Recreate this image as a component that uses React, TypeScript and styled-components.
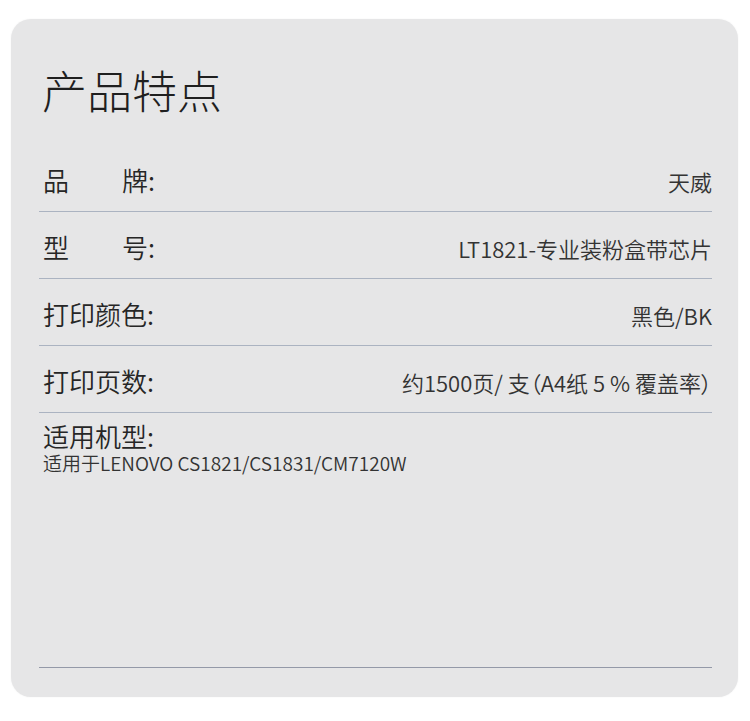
import React from "react";
import styled, { createGlobalStyle } from "styled-components";

const GlobalStyle = createGlobalStyle`
  html, body {
    margin: 0;
    padding: 0;
    background: #ffffff;
  }
  body {
    font-family: "Noto Sans CJK SC", "Noto Sans", sans-serif;
  }
`;

const Page = styled.div`
  width: 750px;
  height: 721px;
  box-sizing: border-box;
  padding: 19px 12px 24px 11px;
  background: #ffffff;
`;

const Card = styled.section`
  box-sizing: border-box;
  height: 678px;
  display: flex;
  flex-direction: column;
  padding: 48px 26px 29px 28px;
  background: #e6e6e7;
  border-radius: 20px;
  box-shadow: 0 0 2px rgba(0, 0, 0, 0.06);
`;

const Title = styled.h1`
  margin: 0 0 33px;
  padding-left: 3px;
  font-family: "Noto Sans CJK SC", sans-serif;
  font-size: 45px;
  line-height: 45px;
  font-weight: 300;
  color: #1f1f1f;
`;

const Row = styled.div`
  display: flex;
  align-items: baseline;
  justify-content: space-between;
  padding: 21px 0 17px 4px;
  border-bottom: 1px solid #abb3c1;
`;

const LastRow = styled.div`
  flex: 1;
  display: flex;
  flex-direction: column;
  gap: 3px;
  padding: 9px 0 0 4px;
  border-bottom: 1px solid #9499a8;
`;

const Label = styled.div<{ $spread?: boolean }>`
  display: flex;
  justify-content: ${(p) => (p.$spread ? "space-between" : "flex-start")};
  width: ${(p) => (p.$spread ? "112px" : "auto")};
  font-size: 26px;
  line-height: 28px;
  font-weight: 350;
  color: #262626;
  white-space: nowrap;
`;

const Value = styled.div`
  font-size: 22px;
  line-height: 22px;
  font-weight: 350;
  font-feature-settings: "palt";
  color: #333333;
  white-space: nowrap;
`;

const Note = styled.div`
  font-size: 19px;
  line-height: 20px;
  font-weight: 350;
  color: #333333;
  white-space: nowrap;
`;

type Spec = { label: string[]; value: string };

const specs: Spec[] = [
  { label: ["品", "牌:"], value: "天威" },
  { label: ["型", "号:"], value: "LT1821-专业装粉盒带芯片" },
  { label: ["打印颜色:"], value: "黑色/BK" },
  { label: ["打印页数:"], value: "约1500页/ 支（A4纸 5 % 覆盖率）" },
];

export default function App() {
  return (
    <>
      <GlobalStyle />
      <Page>
        <Card>
          <Title>产品特点</Title>
          {specs.map((s) => (
            <Row key={s.value}>
              <Label $spread={s.label.length > 1}>
                {s.label.map((part) => (
                  <span key={part}>{part}</span>
                ))}
              </Label>
              <Value>{s.value}</Value>
            </Row>
          ))}
          <LastRow>
            <Label>适用机型:</Label>
            <Note>适用于LENOVO CS1821/CS1831/CM7120W</Note>
          </LastRow>
        </Card>
      </Page>
    </>
  );
}
